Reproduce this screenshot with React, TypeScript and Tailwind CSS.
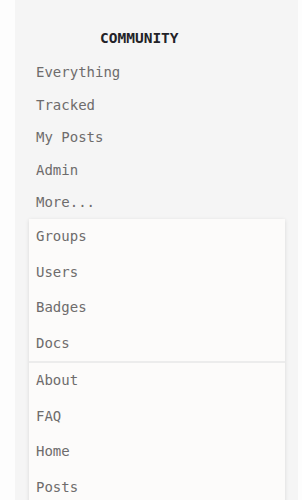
const mainLinks = ["Everything", "Tracked", "My Posts", "Admin", "More..."];
const moreGroups = [
  ["Groups", "Users", "Badges", "Docs"],
  ["About", "FAQ", "Home", "Posts"],
];

export default function App() {
  return (
    <div className="flex h-[500px] w-full bg-[#fdfdfd] pl-[15px] pr-[4px] font-['DejaVu_Sans_Mono','Liberation_Mono',monospace]">
      <nav className="flex flex-1 flex-col overflow-hidden bg-[#f5f5f5]">
        <h2 className="mt-[28px] mb-[8px] pl-[85px] text-[14.5px] font-bold leading-[20px] text-[#222228]">
          COMMUNITY
        </h2>

        <ul className="flex flex-col pl-[21px]">
          {mainLinks.map((link) => (
            <li
              key={link}
              className="flex h-[32.5px] items-center pt-[1px] text-[14px] text-[#6e6c6c]"
            >
              {link}
            </li>
          ))}
        </ul>

        <div className="ml-[14px] w-[256px] bg-[#fcfbfa] shadow-[0px_1px_4px_0px_rgba(0,0,0,0.12)]">
          {moreGroups.map((group, i) => (
            <ul
              key={i}
              className={`flex flex-col ${i > 0 ? "border-t-2 border-[#ececec]" : ""}`}
            >
              {group.map((link) => (
                <li
                  key={link}
                  className="flex h-[35.5px] items-center pt-[1px] pl-[7px] text-[14px] text-[#6e6c6c]"
                >
                  {link}
                </li>
              ))}
            </ul>
          ))}
        </div>
      </nav>
    </div>
  );
}
